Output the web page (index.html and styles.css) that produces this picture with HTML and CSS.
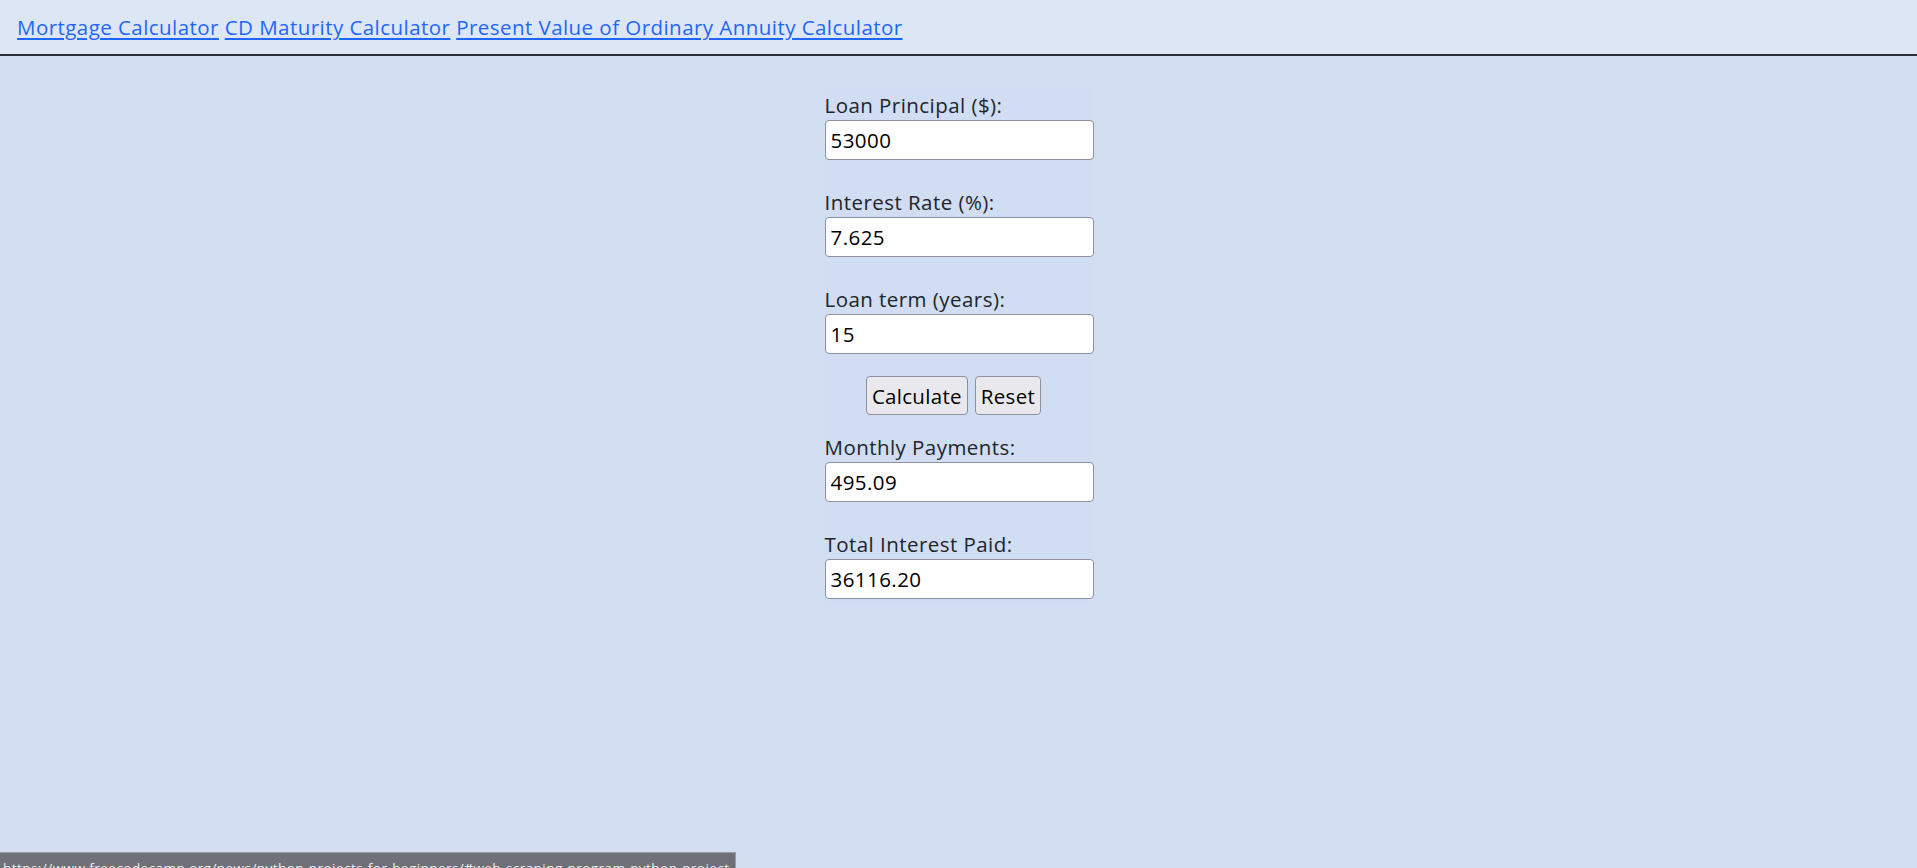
FILE: index.html
```html
<!DOCTYPE html>
<html lang="en">
<head>
<meta charset="utf-8">
<title>Mortgage Calculator</title>
<link rel="stylesheet" href="styles.css">
</head>
<body>
<nav class="topnav">
  <a href="#" class="navlink">Mortgage Calculator</a>
  <a href="#" class="navlink">CD Maturity Calculator</a>
  <a href="#" class="navlink">Present Value of Ordinary Annuity Calculator</a>
</nav>
<main class="page">
  <form class="calc">
    <div class="field">
      <label class="field-label" for="principal">Loan Principal ($):</label>
      <input class="field-input" id="principal" type="text" value="53000">
    </div>
    <div class="field">
      <label class="field-label" for="rate">Interest Rate (%):</label>
      <input class="field-input" id="rate" type="text" value="7.625">
    </div>
    <div class="field">
      <label class="field-label" for="term">Loan term (years):</label>
      <input class="field-input" id="term" type="text" value="15">
    </div>
    <div class="actions">
      <button type="button" class="btn">Calculate</button>
      <button type="reset" class="btn">Reset</button>
    </div>
    <div class="field">
      <label class="field-label" for="monthly">Monthly Payments:</label>
      <input class="field-input" id="monthly" type="text" value="495.09">
    </div>
    <div class="field field-last">
      <label class="field-label" for="interest">Total Interest Paid:</label>
      <input class="field-input" id="interest" type="text" value="36116.20">
    </div>
  </form>
</main>
<div class="statusbar">https://www.freecodecamp.org/news/python-projects-for-beginners/#web-scraping-program-python-project</div>
</body>
</html>
```

FILE: styles.css
```css
html, body {
  margin: 0;
  padding: 0;
}

body {
  background: #d2dff2;
  color: #212529;
  font-family: "Open Sans", "Noto Sans", sans-serif;
  font-size: 20.5px;
  letter-spacing: 0.45px;
  line-height: 30px;
  min-height: 868px;
}

.topnav {
  background: #dde6f4;
  padding: 12px 17px 12px;
  border-bottom: 2px solid #2b2f3a;
  height: 30px;
  white-space: nowrap;
}

.navlink {
  color: #1f66ff;
  text-decoration: underline;
  text-underline-offset: 3px;
}

.page {
  display: flex;
  justify-content: center;
  padding-top: 32px;
}

.calc {
  width: 269px;
  background: #d0ddf2;
  padding: 2px 0 6px;
  margin-left: 1px;
}

.field {
  display: flex;
  flex-direction: column;
  margin-bottom: 27px;
}

.field-last {
  margin-bottom: 0;
}

.field-label {
  display: block;
  height: 30px;
  white-space: nowrap;
}

.field-input {
  box-sizing: border-box;
  width: 269px;
  height: 40px;
  margin: 0;
  padding: 0 5px;
  border: 1px solid #8f8f9d;
  border-radius: 4px;
  background: #ffffff;
  color: #000000;
  font-family: inherit;
  font-size: 20.5px;
  letter-spacing: 0.45px;
}

.actions {
  display: flex;
  justify-content: center;
  gap: 7px;
  margin-top: -5px;
  margin-bottom: 17px;
  padding-right: 11px;
}

.btn {
  box-sizing: border-box;
  height: 39px;
  margin: 0;
  padding: 0 5px;
  border: 1px solid #8f8f9d;
  border-radius: 4px;
  background: #e9e9ed;
  color: #000000;
  font-family: inherit;
  font-size: 20.5px;
  letter-spacing: 0.3px;
}

.statusbar {
  position: fixed;
  left: 0;
  top: 852px;
  width: 736px;
  height: 30px;
  padding: 7px 0 0 3px;
  box-sizing: border-box;
  background: #6f7179;
  border-top: 1px solid #9b9da3;
  border-right: 1px solid #9b9da3;
  color: #f0f0f0;
  font-family: "Open Sans", "Noto Sans", sans-serif;
  font-size: 13.5px;
  line-height: 17px;
  white-space: nowrap;
  overflow: hidden;
}
```
